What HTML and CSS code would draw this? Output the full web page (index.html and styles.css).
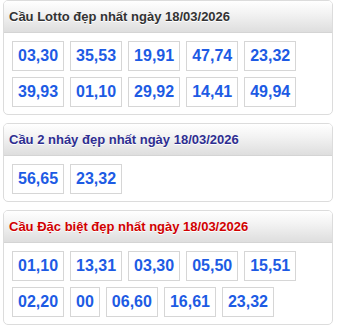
FILE: index.html
```html
<!DOCTYPE html>
<html lang="vi">
<head>
<meta charset="utf-8">
<link rel="stylesheet" href="styles.css">
</head>
<body>
<div class="page">
  <section class="panel">
    <div class="panel-head"><h2 class="title title-dark">Cầu Lotto đẹp nhất ngày 18/03/2026</h2></div>
    <div class="panel-body">
      <span class="num">03,30</span><span class="num">35,53</span><span class="num">19,91</span><span class="num">47,74</span><span class="num">23,32</span>
      <span class="num">39,93</span><span class="num">01,10</span><span class="num">29,92</span><span class="num">14,41</span><span class="num">49,94</span>
    </div>
  </section>
  <section class="panel">
    <div class="panel-head"><h2 class="title title-navy">Cầu 2 nháy đẹp nhất ngày 18/03/2026</h2></div>
    <div class="panel-body">
      <span class="num">56,65</span><span class="num">23,32</span>
    </div>
  </section>
  <section class="panel">
    <div class="panel-head"><h2 class="title title-red">Cầu Đặc biệt đẹp nhất ngày 18/03/2026</h2></div>
    <div class="panel-body">
      <span class="num">01,10</span><span class="num">13,31</span><span class="num">03,30</span><span class="num">05,50</span><span class="num">15,51</span>
      <span class="num">02,20</span><span class="num">00</span><span class="num">06,60</span><span class="num">16,61</span><span class="num">23,32</span>
    </div>
  </section>
</div>
</body>
</html>
```

FILE: styles.css
```css
* { box-sizing: border-box; }
html, body { margin: 0; padding: 0; background: #fff; }
body { font-family: "Liberation Sans", Arial, sans-serif; }
.page {
  padding: 0 4px 0 3px;
  display: flex;
  flex-direction: column;
  gap: 8px;
}
.panel {
  border: 1px solid #dcdcdc;
  border-radius: 5px;
  overflow: hidden;
  background: #fff;
}
.panel-head {
  height: 32px;
  display: flex;
  align-items: center;
  padding: 0 8px 0 5px;
  background: linear-gradient(to bottom, #ffffff 0%, #f3f3f3 40%, #dedede 100%);
  border-bottom: 1px solid #d4d4d4;
}
.title {
  margin: 0;
  font-size: 13px;
  font-weight: bold;
  line-height: 16px;
  text-shadow: 0 1px 0 #fff;
}
.title-dark { color: #333; }
.title-navy { color: #2e2e91; }
.title-red { color: #d10000; }
.panel-body {
  display: flex;
  flex-wrap: wrap;
  gap: 6px;
  padding: 8px 8px 7px 8px;
}
.num {
  display: block;
  height: 30px;
  line-height: 28px;
  padding: 0 5px;
  border: 1px solid #d6d6d6;
  color: #1d5be4;
  font-size: 16px;
  font-weight: bold;
}
```
